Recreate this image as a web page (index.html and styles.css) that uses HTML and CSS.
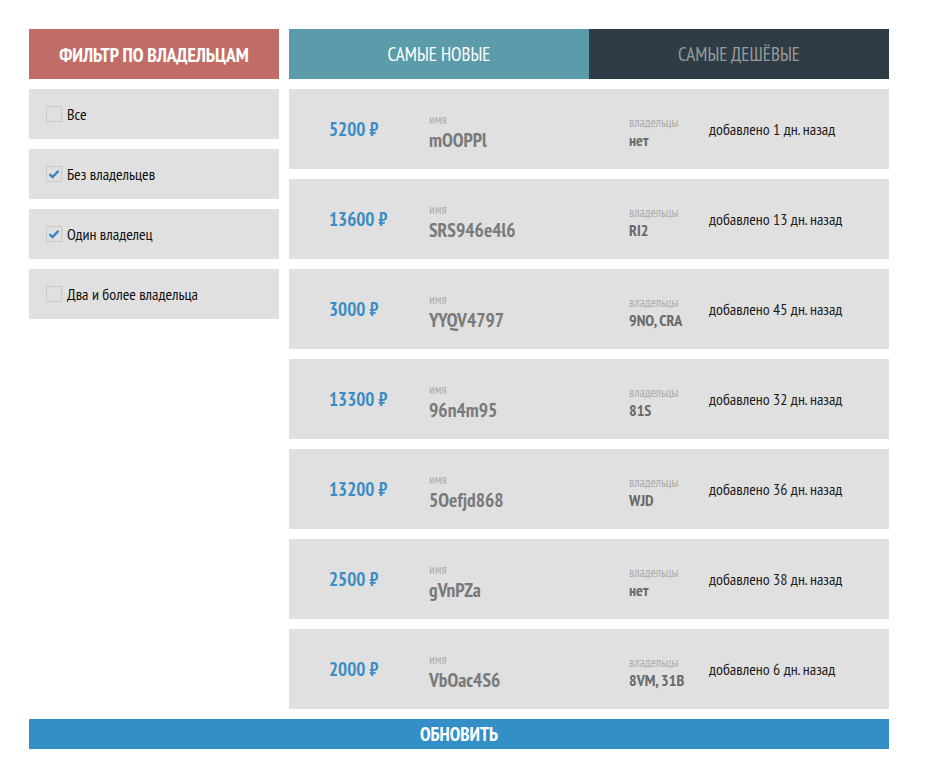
FILE: index.html
```html
<!DOCTYPE html>
<html lang="ru">
<head>
<meta charset="utf-8">
<title>Список</title>
<link rel="stylesheet" href="styles.css">
</head>
<body>
<div class="page">
  <aside class="sidebar">
    <div class="filter-title">Фильтр по владельцам</div>
    <label class="option"><span class="box"></span>Все</label>
    <label class="option"><span class="box checked"><svg viewBox="0 0 16 16" width="16" height="16"><path d="M3.5 8.2 L6.5 11 L12.5 4.8" fill="none" stroke="#3a86bf" stroke-width="2.4"/></svg></span>Без владельцев</label>
    <label class="option"><span class="box checked"><svg viewBox="0 0 16 16" width="16" height="16"><path d="M3.5 8.2 L6.5 11 L12.5 4.8" fill="none" stroke="#3a86bf" stroke-width="2.4"/></svg></span>Один владелец</label>
    <label class="option"><span class="box"></span>Два и более владельца</label>
  </aside>
  <main class="content">
    <div class="tabs">
      <div class="tab active">Самые новые</div>
      <div class="tab">Самые дешёвые</div>
    </div>
    <div class="row"><div class="price">5200 ₽</div><div class="name"><span class="label">имя</span><span class="val">mOOPPl</span></div><div class="owners"><span class="label">владельцы</span><span class="oval">нет</span></div><div class="date">добавлено 1 дн. назад</div></div>
    <div class="row"><div class="price">13600 ₽</div><div class="name"><span class="label">имя</span><span class="val">SRS946e4l6</span></div><div class="owners"><span class="label">владельцы</span><span class="oval">RI2</span></div><div class="date">добавлено 13 дн. назад</div></div>
    <div class="row"><div class="price">3000 ₽</div><div class="name"><span class="label">имя</span><span class="val">YYQV4797</span></div><div class="owners"><span class="label">владельцы</span><span class="oval">9NO, CRA</span></div><div class="date">добавлено 45 дн. назад</div></div>
    <div class="row"><div class="price">13300 ₽</div><div class="name"><span class="label">имя</span><span class="val">96n4m95</span></div><div class="owners"><span class="label">владельцы</span><span class="oval">81S</span></div><div class="date">добавлено 32 дн. назад</div></div>
    <div class="row"><div class="price">13200 ₽</div><div class="name"><span class="label">имя</span><span class="val">5Oefjd868</span></div><div class="owners"><span class="label">владельцы</span><span class="oval">WJD</span></div><div class="date">добавлено 36 дн. назад</div></div>
    <div class="row"><div class="price">2500 ₽</div><div class="name"><span class="label">имя</span><span class="val">gVnPZa</span></div><div class="owners"><span class="label">владельцы</span><span class="oval">нет</span></div><div class="date">добавлено 38 дн. назад</div></div>
    <div class="row"><div class="price">2000 ₽</div><div class="name"><span class="label">имя</span><span class="val">VbOac4S6</span></div><div class="owners"><span class="label">владельцы</span><span class="oval">8VM, 31B</span></div><div class="date">добавлено 6 дн. назад</div></div>
  </main>
  <button class="refresh">Обновить</button>
</div>
</body>
</html>
```
FILE: styles.css
```css
* { box-sizing: border-box; }
body {
  margin: 0;
  background: #fff;
  font-family: "PT Sans Narrow", "Liberation Sans Narrow", "Open Sans", sans-serif;
  font-stretch: condensed;
  color: #222;
}
.page {
  width: 918px;
  padding: 29px 29px 0 29px;
  display: grid;
  grid-template-columns: 250px 600px;
  column-gap: 10px;
  row-gap: 10px;
}
.sidebar { display: flex; flex-direction: column; gap: 10px; }
.filter-title {
  height: 50px;
  background: #c26c67;
  color: #fff;
  font-weight: bold;
  font-size: 19.5px;
  text-transform: uppercase;
  display: flex;
  align-items: center;
  justify-content: center;
}
.option {
  height: 50px;
  background: #e0e0e0;
  display: flex;
  align-items: center;
  padding-left: 17px;
  font-size: 16px;
  color: #111;
}
.box {
  width: 16px;
  height: 16px;
  border: 1px solid #c9c9c9;
  margin-right: 5px;
  display: flex;
  align-items: center;
  justify-content: center;
}
.box svg { display: block; margin: -1px; }
.content { display: flex; flex-direction: column; gap: 10px; }
.tabs { display: flex; height: 50px; }
.tab {
  flex: 1;
  display: flex;
  align-items: center;
  justify-content: center;
  text-transform: uppercase;
  font-size: 19px;
  background: #2e3d45;
  color: #9a9a9a;
}
.tab.active { background: #5c9ba9; color: #fff; }
.row {
  height: 80px;
  background: #e0e0e0;
  display: flex;
  align-items: center;
  padding-left: 40px;
}
.price {
  width: 100px;
  color: #3a8cc4;
  font-weight: bold;
  font-size: 19px;
}
.name { width: 200px; display: flex; flex-direction: column; margin-top: 6px; }
.owners { width: 80px; display: flex; flex-direction: column; margin-top: 6px; }
.label { font-size: 13px; color: #adadad; line-height: 15px; }
.val { font-size: 19.5px; font-weight: bold; color: #7a7a7a; line-height: 25px; }
.oval { font-size: 16px; font-weight: bold; color: #6a6a6a; line-height: 20px; }
.date { font-size: 16px; color: #1c1c1c; }
.refresh {
  grid-column: 1 / span 2;
  height: 30px;
  border: 0;
  background: #338fc6;
  color: #fff;
  font-family: inherit;
  font-stretch: condensed;
  font-weight: bold;
  font-size: 19px;
  text-transform: uppercase;
  padding: 0;
}
```
